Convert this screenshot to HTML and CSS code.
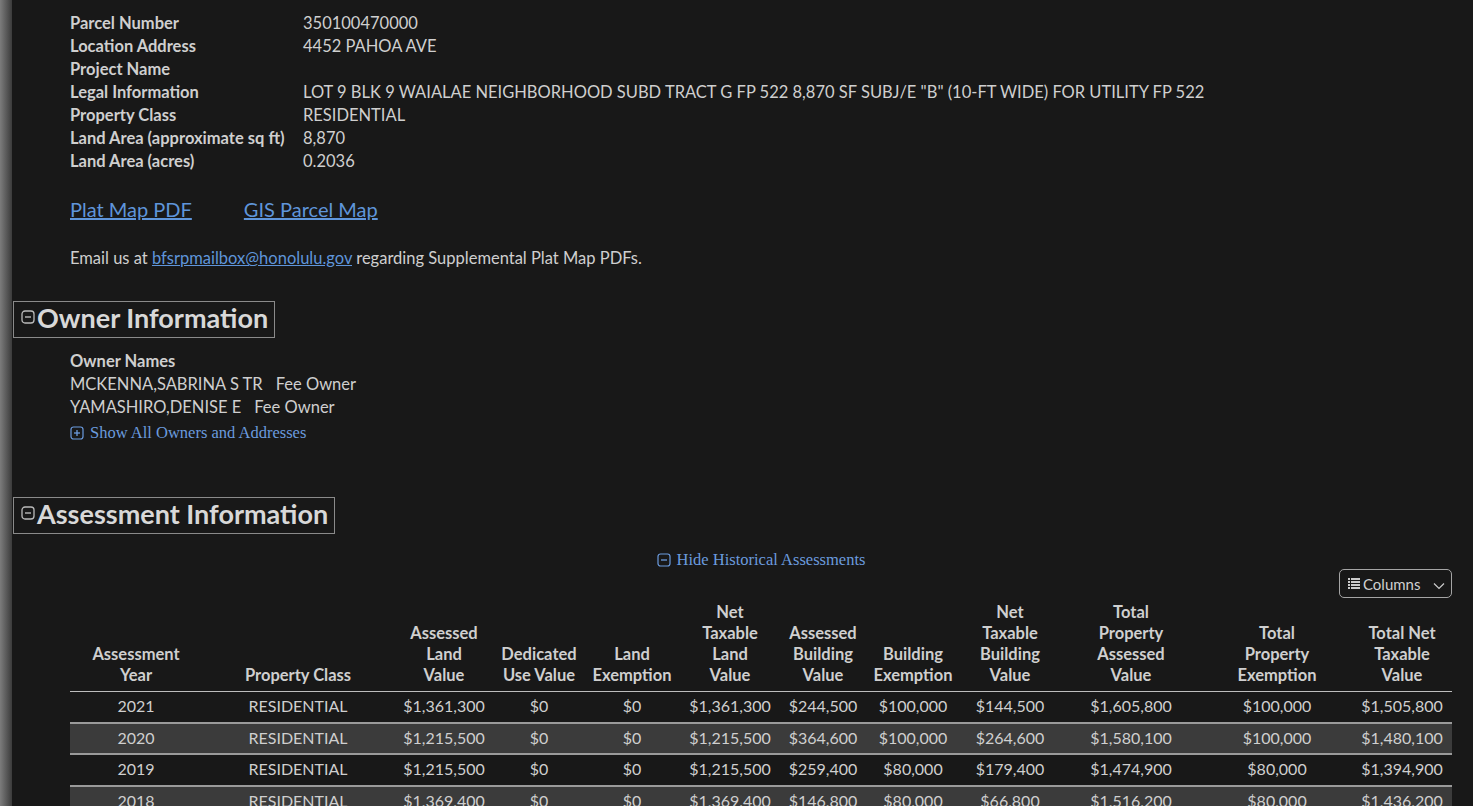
FILE: index.html
```html
<!DOCTYPE html>
<html>
<head>
<meta charset="utf-8">
<link rel="stylesheet" href="styles.css">
</head>
<body>
<div class="page">
  <div class="strip"></div>
  <main class="main">
    <div class="details">
      <div class="lbl">Parcel Number</div><div class="val">350100470000</div>
      <div class="lbl">Location Address</div><div class="val">4452 PAHOA AVE</div>
      <div class="lbl">Project Name</div><div class="val"></div>
      <div class="lbl">Legal Information</div><div class="val">LOT 9 BLK 9 WAIALAE NEIGHBORHOOD SUBD TRACT G FP 522 8,870 SF SUBJ/E "B" (10-FT WIDE) FOR UTILITY FP 522</div>
      <div class="lbl">Property Class</div><div class="val">RESIDENTIAL</div>
      <div class="lbl">Land Area (approximate sq ft)</div><div class="val">8,870</div>
      <div class="lbl">Land Area (acres)</div><div class="val">0.2036</div>
    </div>

    <div class="maplinks">
      <a href="#" class="biglink">Plat Map PDF</a>
      <a href="#" class="biglink">GIS Parcel Map</a>
    </div>

    <p class="email">Email us at <a href="#" class="mail">bfsrpmailbox@honolulu.gov</a> regarding Supplemental Plat Map PDFs.</p>

    <h2 class="sechead">
      <svg class="sqicon" viewBox="0 0 14 14" width="14" height="14"><rect x="1" y="1" width="12" height="12" rx="3" fill="none" stroke="#bbb" stroke-width="1.3"/><line x1="4" y1="7" x2="10" y2="7" stroke="#bbb" stroke-width="1.4"/></svg>Owner Information
    </h2>

    <div class="owners">
      <div class="lbl">Owner Names</div>
      <div>MCKENNA,SABRINA S TR<span class="role">Fee Owner</span></div>
      <div>YAMASHIRO,DENISE E<span class="role">Fee Owner</span></div>
      <a href="#" class="serlink"><svg class="licon" viewBox="0 0 14 14" width="14" height="14"><rect x="1" y="1" width="12" height="12" rx="2.5" fill="none" stroke="#6b9bde" stroke-width="1.2"/><line x1="4" y1="7" x2="10" y2="7" stroke="#6b9bde" stroke-width="1.3"/><line x1="7" y1="4" x2="7" y2="10" stroke="#6b9bde" stroke-width="1.3"/></svg>Show All Owners and Addresses</a>
    </div>

    <h2 class="sechead sechead2">
      <svg class="sqicon" viewBox="0 0 14 14" width="14" height="14"><rect x="1" y="1" width="12" height="12" rx="3" fill="none" stroke="#bbb" stroke-width="1.3"/><line x1="4" y1="7" x2="10" y2="7" stroke="#bbb" stroke-width="1.4"/></svg>Assessment Information
    </h2>

    <div class="assess">
      <div class="histrow">
        <a href="#" class="serlink"><svg class="licon" viewBox="0 0 14 14" width="14" height="14"><rect x="1" y="1" width="12" height="12" rx="2.5" fill="none" stroke="#6b9bde" stroke-width="1.2"/><line x1="4" y1="7" x2="10" y2="7" stroke="#6b9bde" stroke-width="1.3"/></svg>Hide Historical Assessments</a>
      </div>
      <div class="colrow">
        <button class="colbtn"><svg class="listicon" viewBox="0 0 12 11" width="12" height="11"><g fill="#ccc"><rect x="0" y="0" width="2" height="2"/><rect x="3" y="0" width="9" height="2"/><rect x="0" y="3" width="2" height="2"/><rect x="3" y="3" width="9" height="2"/><rect x="0" y="6" width="2" height="2"/><rect x="3" y="6" width="9" height="2"/><rect x="0" y="9" width="2" height="2"/><rect x="3" y="9" width="9" height="2"/></g></svg>Columns<svg class="chev" viewBox="0 0 12 8" width="12" height="8"><polyline points="1,1.5 6,6.5 11,1.5" fill="none" stroke="#ccc" stroke-width="1.2"/></svg></button>
      </div>
      <table class="atable">
        <colgroup>
          <col class="c1"><col class="c2"><col class="c3"><col class="c4"><col class="c5"><col class="c6"><col class="c7"><col class="c8"><col class="c9"><col class="c10"><col class="c11"><col class="c12">
        </colgroup>
        <thead>
          <tr>
            <th>Assessment<br>Year</th>
            <th>Property Class</th>
            <th>Assessed<br>Land<br>Value</th>
            <th>Dedicated<br>Use Value</th>
            <th>Land<br>Exemption</th>
            <th>Net<br>Taxable<br>Land<br>Value</th>
            <th>Assessed<br>Building<br>Value</th>
            <th>Building<br>Exemption</th>
            <th>Net<br>Taxable<br>Building<br>Value</th>
            <th>Total<br>Property<br>Assessed<br>Value</th>
            <th>Total<br>Property<br>Exemption</th>
            <th>Total Net<br>Taxable<br>Value</th>
          </tr>
        </thead>
        <tbody>
          <tr><td>2021</td><td>RESIDENTIAL</td><td>$1,361,300</td><td>$0</td><td>$0</td><td>$1,361,300</td><td>$244,500</td><td>$100,000</td><td>$144,500</td><td>$1,605,800</td><td>$100,000</td><td>$1,505,800</td></tr>
          <tr class="alt"><td>2020</td><td>RESIDENTIAL</td><td>$1,215,500</td><td>$0</td><td>$0</td><td>$1,215,500</td><td>$364,600</td><td>$100,000</td><td>$264,600</td><td>$1,580,100</td><td>$100,000</td><td>$1,480,100</td></tr>
          <tr><td>2019</td><td>RESIDENTIAL</td><td>$1,215,500</td><td>$0</td><td>$0</td><td>$1,215,500</td><td>$259,400</td><td>$80,000</td><td>$179,400</td><td>$1,474,900</td><td>$80,000</td><td>$1,394,900</td></tr>
          <tr class="alt"><td>2018</td><td>RESIDENTIAL</td><td>$1,369,400</td><td>$0</td><td>$0</td><td>$1,369,400</td><td>$146,800</td><td>$80,000</td><td>$66,800</td><td>$1,516,200</td><td>$80,000</td><td>$1,436,200</td></tr>
        </tbody>
      </table>
    </div>
  </main>
</div>
</body>
</html>
```

FILE: styles.css
```css
html, body {
  margin: 0;
  padding: 0;
  background: #181818;
  height: 100%;
  overflow: hidden;
}
body {
  font-family: Lato, "Liberation Sans", sans-serif;
  font-size: 16.5px;
  color: #cfcfcf;
}
.page {
  display: flex;
  min-height: 100vh;
}
.strip {
  width: 12px;
  flex: 0 0 12px;
  background: linear-gradient(to right, #7c7c7c, #3b3b3b);
}
.main {
  flex: 1;
  padding: 12px 21px 0 1px;
}
.details {
  display: grid;
  grid-template-columns: 233px 1fr;
  margin-left: 57px;
  line-height: 23px;
}
.lbl {
  font-weight: bold;
}
.maplinks {
  margin: 25px 0 0 57px;
  display: flex;
  gap: 52px;
  line-height: 23px;
}
.biglink {
  font-size: 20px;
  color: #5f95da;
  text-decoration: underline;
}
.email {
  margin: 26px 0 0 57px;
  line-height: 23px;
}
.mail {
  color: #5f95da;
}
.sechead {
  display: inline-flex;
  align-items: center;
  margin: 31px 0 0 0;
  padding: 0 6px 4px 7px;
  height: 31px;
  border: 1px solid #8a8a8a;
  font-size: 27px;
  font-weight: bold;
  color: #d8d8d8;
  line-height: 31px;
}
.sqicon {
  margin-right: 2px;
  margin-top: -1px;
}
.owners {
  margin: 12px 0 0 57px;
  line-height: 23px;
}
.role {
  margin-left: 13px;
}
.serlink {
  display: inline-flex;
  align-items: center;
  font-family: "Liberation Serif", serif;
  font-size: 16.5px;
  color: #6b9bde;
  text-decoration: none;
  line-height: 27px;
}
.licon {
  margin-right: 6px;
}
.sechead2 {
  margin-top: 51px;
}
.assess {
  margin: 12px 0 0 57px;
}
.histrow {
  display: flex;
  justify-content: center;
}
.colrow {
  display: flex;
  justify-content: flex-end;
  margin-top: -4px;
}
.colbtn {
  display: inline-flex;
  align-items: center;
  height: 29px;
  width: 113px;
  padding: 0 6px 0 8px;
  border: 1px solid #a5a5a5;
  border-radius: 5px;
  background: #181818;
  color: #d0d0d0;
  font-family: Lato, "Liberation Sans", sans-serif;
  font-size: 15px;
}
.listicon {
  margin-right: 3px;
}
.chev {
  margin-left: auto;
  margin-top: 5px;
}
.atable {
  width: 1382px;
  table-layout: fixed;
  border-collapse: collapse;
  margin-top: 4px;
}
.c1 { width: 132px; }
.c2 { width: 192px; }
.c3 { width: 100px; }
.c4 { width: 90px; }
.c5 { width: 96px; }
.c6 { width: 100px; }
.c7 { width: 86px; }
.c8 { width: 94px; }
.c9 { width: 100px; }
.c10 { width: 142px; }
.c11 { width: 150px; }
.c12 { width: 100px; }
.atable th {
  font-weight: bold;
  font-size: 16.5px;
  line-height: 21px;
  vertical-align: bottom;
  text-align: center;
  padding: 0 0 5px 0;
  border-bottom: 1px solid #bdbdbd;
  color: #cfcfcf;
}
.atable td {
  font-size: 16px;
  text-align: center;
  padding: 4px 0 6px;
  line-height: 19.5px;
  border-top: 2px solid #9a9a9a;
  white-space: nowrap;
}
.atable tbody tr:first-child td {
  border-top: none;
}
.atable tr.alt td {
  background: #3b3b3b;
}
```
